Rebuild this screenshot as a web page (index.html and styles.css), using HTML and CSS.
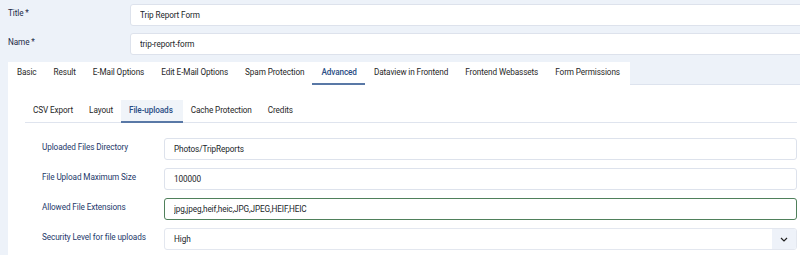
FILE: index.html
```html
<!DOCTYPE html>
<html lang="en">
<head>
    <meta charset="UTF-8">
    <title>Trip Report Form</title>
    <link rel="stylesheet" href="styles.css">
</head>
<body>
    <div class="page">
        <div class="top-field">
            <label class="top-label">Title *</label>
            <input class="text-input" type="text" value="Trip Report Form">
        </div>
        <div class="top-field">
            <label class="top-label">Name *</label>
            <input class="text-input" type="text" value="trip-report-form">
        </div>

        <div class="card">
            <ul class="tabs">
                <li class="tab">Basic</li>
                <li class="tab">Result</li>
                <li class="tab">E-Mail Options</li>
                <li class="tab">Edit E-Mail Options</li>
                <li class="tab">Spam Protection</li>
                <li class="tab active">Advanced</li>
                <li class="tab">Dataview in Frontend</li>
                <li class="tab">Frontend Webassets</li>
                <li class="tab">Form Permissions</li>
            </ul>

            <div class="card-body">
                <ul class="subtabs">
                    <li class="subtab">CSV Export</li>
                    <li class="subtab">Layout</li>
                    <li class="subtab active">File-uploads</li>
                    <li class="subtab">Cache Protection</li>
                    <li class="subtab">Credits</li>
                </ul>

                <div class="fields">
                    <div class="field-row">
                        <label class="field-label">Uploaded Files Directory</label>
                        <input class="text-input" type="text" value="Photos/TripReports">
                    </div>
                    <div class="field-row">
                        <label class="field-label">File Upload Maximum Size</label>
                        <input class="text-input" type="text" value="100000">
                    </div>
                    <div class="field-row">
                        <label class="field-label">Allowed File Extensions</label>
                        <input class="text-input valid" type="text" value="jpg,jpeg,heif,heic,JPG,JPEG,HEIF,HEIC">
                    </div>
                    <div class="field-row">
                        <label class="field-label">Security Level for file uploads</label>
                        <div class="select">
                            <span class="select-value">High</span>
                            <span class="select-arrow">
                                <svg width="8" height="5" viewBox="0 0 8 5"><path d="M1 1l3 3 3-3" fill="none" stroke="#222" stroke-width="1.2"/></svg>
                            </span>
                        </div>
                    </div>
                </div>
            </div>
        </div>
    </div>
</body>
</html>
```

FILE: styles.css
```css
body {
    margin: 0;
    background-color: #edf2f9;
    font-family: Roboto, "Liberation Sans", sans-serif;
    font-size: 8.2px;
    letter-spacing: -0.1px;
    color: #22262a;
    overflow: hidden;
}

.page {
    width: 804px;
    padding: 4px 0 0 8px;
}

.top-field {
    display: flex;
    align-items: center;
    margin-bottom: 7px;
}

.top-label {
    width: 122px;
    color: #1e2b47;
    margin-top: -4px;
}

.text-input {
    flex: 1;
    box-sizing: border-box;
    height: 22px;
    padding: 0 9px;
    background: #fff;
    border: 1px solid #dde2ec;
    border-radius: 3px;
    font-family: inherit;
    font-size: 8.2px;
    letter-spacing: -0.1px;
    color: #22262a;
    outline: none;
}

.text-input.valid {
    border-color: #4f805b;
}

.card {
    margin-top: 1px;
}

.tabs {
    display: flex;
    list-style: none;
    margin: 0;
    padding: 0;
    border-bottom: 1px solid #dde3ee;
}

.tab {
    background: #fff;
    padding: 0 8px 0 9px;
    line-height: 21px;
    border-bottom: 2px solid transparent;
    margin-bottom: -1px;
    color: #1f1f1f;
}

.tab:last-child {
    padding-right: 10px;
}

.tab.active {
    color: #2a4d85;
    font-weight: 500;
    border-bottom-color: #5978a6;
}

.card-body {
    background: #fff;
    padding: 15px 15px 20px 17px;
}

.subtabs {
    display: flex;
    list-style: none;
    margin: 0;
    padding: 0;
    border-bottom: 1px solid #dfe4ee;
}

.subtab {
    padding: 0 8px;
    line-height: 21px;
    border-bottom: 2px solid transparent;
    margin-bottom: -1px;
    color: #1f1f1f;
}

.subtab.active {
    background: #f0f4f9;
    color: #2a4d85;
    font-weight: 500;
    padding-right: 10px;
    border-bottom-color: #5978a6;
}

.fields {
    padding: 15px 0 0 17px;
    display: flex;
    flex-direction: column;
    gap: 8px;
}

.field-row {
    display: flex;
    align-items: center;
}

.field-label {
    width: 122px;
    color: #24396a;
    margin-top: -4px;
}

.select {
    flex: 1;
    display: flex;
    align-items: stretch;
    height: 22px;
    box-sizing: border-box;
    border: 1px solid #e3e7ef;
    border-radius: 3px;
    overflow: hidden;
}

.select-value {
    flex: 1;
    padding-left: 9px;
    line-height: 20px;
}

.select-arrow {
    width: 24px;
    background: #eef2f9;
    display: flex;
    align-items: center;
    justify-content: center;
}
```
